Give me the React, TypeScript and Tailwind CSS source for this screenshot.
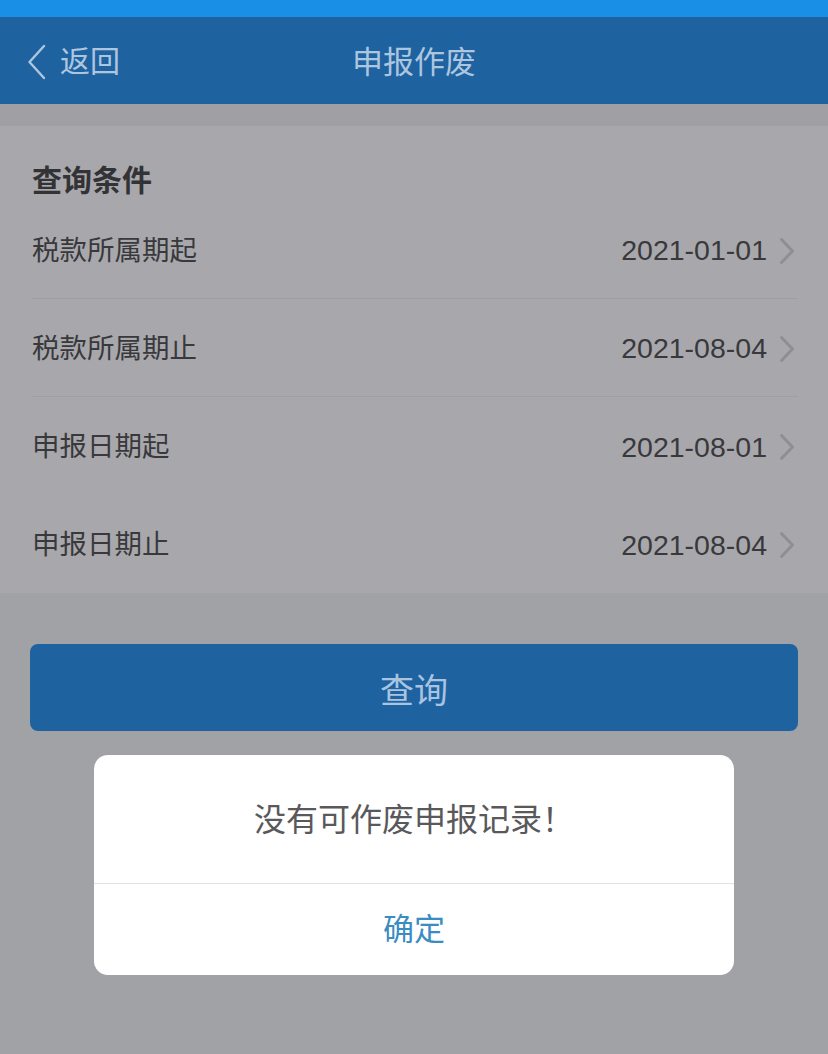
const rows = [
  { label: "税款所属期起", value: "2021-01-01", line: true },
  { label: "税款所属期止", value: "2021-08-04", line: true },
  { label: "申报日期起", value: "2021-08-01", line: false },
  { label: "申报日期止", value: "2021-08-04", line: false },
]

function Chevron() {
  return (
    <svg width="16" height="28" viewBox="0 0 16 28" fill="none" className="shrink-0">
      <path d="M2.5 2.5 L13.5 14 L2.5 25.5" stroke="#8f8f93" strokeWidth="3" strokeLinecap="round" strokeLinejoin="round" />
    </svg>
  )
}

// iOS-style tall back arrow
function BackArrow() {
  return (
    <svg width="20" height="36" viewBox="0 0 20 36" fill="none" className="shrink-0">
      <path d="M17 2 L2.5 18 L17 34" stroke="#adc6df" strokeWidth="2.4" strokeLinecap="round" strokeLinejoin="round" />
    </svg>
  )
}

export default function App() {
  return (
    <div
      className="relative h-[1054px] w-[828px] overflow-hidden bg-[#a1a2a5]"
      style={{ fontFamily: '"Liberation Sans", "Noto Sans CJK SC", sans-serif' }}
    >
      <div className="h-[17px] bg-[#1a8fe6]" />

      <header className="grid h-[87px] grid-cols-3 items-center bg-[#1f62a0] pt-[2px] text-[#adc6df]">
        <div className="flex items-center pl-[27px]">
          <BackArrow />
          <span className="ml-[13px] text-[30px] leading-none">返回</span>
        </div>
        <div className="pt-[2px] text-center text-[31px] leading-none">申报作废</div>
        <div />
      </header>

      <div className="h-[22px] bg-[#a0a0a4]" />

      <section className="bg-[#a8a8ac]">
        <div className="flex h-[75px] items-end pb-[5px] pl-[32px] text-[30px] font-bold leading-[30px] text-[#333336]">
          查询条件
        </div>
        {rows.map((r) => (
          <div
            key={r.label}
            className={
              r.line
                ? "ml-[32px] mr-[30px] flex h-[98px] items-center border-b border-[#9f9fa3] pt-[2px] text-[#39393c]"
                : "ml-[32px] mr-[30px] flex h-[98px] items-center pt-[2px] text-[#39393c]"
            }
          >
            <span className="flex-1 text-[27.5px] leading-none">{r.label}</span>
            <span className="mr-[12px] text-[28.5px] leading-none">{r.value}</span>
            <div className="mr-[3px]">
              <Chevron />
            </div>
          </div>
        ))}
      </section>

      <button className="mx-[30px] mt-[51px] flex h-[87px] w-[768px] items-center justify-center rounded-[8px] bg-[#1f62a0] pt-[6px] text-[34px] leading-none text-[#a9c4e1]">
        查询
      </button>

      {/* alert dialog over the dimmed page */}
      <div className="absolute left-[94px] top-[755px] flex h-[220px] w-[640px] flex-col overflow-hidden rounded-[14px] bg-white">
        <div className="flex h-[128px] items-center justify-center pt-[2px] text-[32px] leading-none text-[#59595c]">
          没有可作废申报记录！
        </div>
        <div className="h-px bg-[#e2e2e4]" />
        <div className="flex flex-1 items-center justify-center text-[31px] leading-none text-[#3a8cc2]">
          确定
        </div>
      </div>
    </div>
  )
}
